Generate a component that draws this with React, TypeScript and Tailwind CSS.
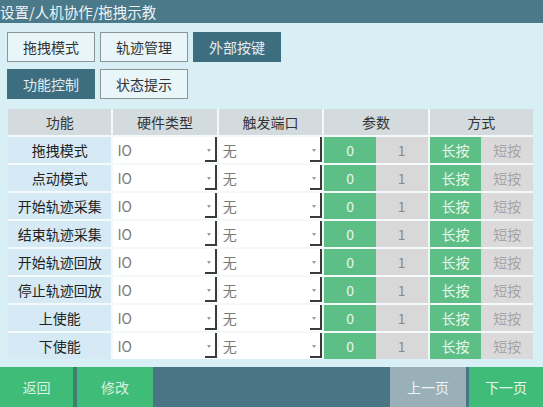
import React from 'react';

const rows = ['拖拽模式', '点动模式', '开始轨迹采集', '结束轨迹采集', '开始轨迹回放', '停止轨迹回放', '上使能', '下使能'];
const headers = ['功能', '硬件类型', '触发端口', '参数', '方式'];

const font = { fontFamily: '"Microsoft YaHei", "Noto Sans CJK SC", "Noto Sans", sans-serif' };

const SelectCell: React.FC<{ value: string }> = ({ value }) => (
    <div className="relative bg-white flex items-center pl-[4px] text-[14px] text-[#7a7a7a]">
        <span>{value}</span>
        <svg className="absolute right-[6px] top-[12px]" width="4" height="3" viewBox="0 0 4 3">
            <path d="M0 0 L4 0 L2 3 Z" fill="#9a9a9a" />
        </svg>
        <div className="absolute right-0 top-0 bottom-[1px] w-[2px] bg-[#3a3a3a]" />
        <div className="absolute right-0 bottom-[1px] w-[12px] h-[2px] bg-[#3a3a3a]" />
    </div>
);

const Tab: React.FC<{ label: string; active?: boolean }> = ({ label, active }) => (
    <div
        className={
            'w-[88px] h-[30px] flex items-center justify-center text-[14px] border ' +
            (active ? 'bg-[#3d6e80] border-[#3d6e80] text-[#e4ecef]' : 'bg-[#e8f5f9] border-[#8c9496] text-[#333]')
        }
    >
        {label}
    </div>
);

export default function App() {
    return (
        <div className="w-[543px] h-[407px] bg-[#d9eff6] flex flex-col overflow-hidden" style={font}>
            {/* title bar */}
            <div className="h-[23px] bg-[#4a7989] text-[#eef4f6] text-[14.5px] leading-[23px] pl-0 whitespace-nowrap">
                设置/人机协作/拖拽示教
            </div>

            {/* tabs */}
            <div className="flex gap-[5px] pl-[7px] mt-[9px]">
                <Tab label="拖拽模式" />
                <Tab label="轨迹管理" />
                <Tab label="外部按键" active />
            </div>
            <div className="flex gap-[5px] pl-[7px] mt-[7px]">
                <Tab label="功能控制" active />
                <Tab label="状态提示" />
            </div>

            {/* table */}
            <div className="ml-[8px] mt-[10px] w-[525px] bg-[#f4f9fb] grid grid-cols-5 gap-[2px] auto-rows-[26px]">
                {headers.map(h => (
                    <div key={h} className="bg-[#d3dbde] flex items-center justify-center text-[14px] text-[#333]">
                        {h}
                    </div>
                ))}
                {rows.map(r => (
                    <React.Fragment key={r}>
                        <div className="bg-[#d5eaf4] flex items-center justify-center text-[14px] text-[#222]">{r}</div>
                        <SelectCell value="IO" />
                        <SelectCell value="无" />
                        <div className="grid grid-cols-2 text-[14px]">
                            <div className="bg-[#5dbf85] text-[#eaf7ef] flex items-center justify-center">0</div>
                            <div className="bg-[#d8d8d8] text-[#8a8a8a] flex items-center justify-center">1</div>
                        </div>
                        <div className="grid grid-cols-2 text-[14px]">
                            <div className="bg-[#5dbf85] text-[#eaf7ef] flex items-center justify-center">长按</div>
                            <div className="bg-[#dadada] text-[#a4a4a4] flex items-center justify-center">短按</div>
                        </div>
                    </React.Fragment>
                ))}
            </div>

            {/* bottom bar */}
            <div className="mt-auto h-[40px] bg-[#4a7585] flex text-[14px]">
                <div className="w-[76px] bg-[#3fbd78] text-[#d8f2e3] flex items-center justify-center border-r-[3px] border-[#2f8a5c]">返回</div>
                <div className="w-[76px] bg-[#3fbd78] text-[#d8f2e3] flex items-center justify-center ml-[1px]">修改</div>
                <div className="flex-1" />
                <div className="w-[76px] bg-[#9ab0b8] text-[#eef3f5] flex items-center justify-center">上一页</div>
                <div className="w-[74px] bg-[#3fbd78] text-[#e4f6ec] flex items-center justify-center ml-[3px]">下一页</div>
            </div>
        </div>
    );
}
